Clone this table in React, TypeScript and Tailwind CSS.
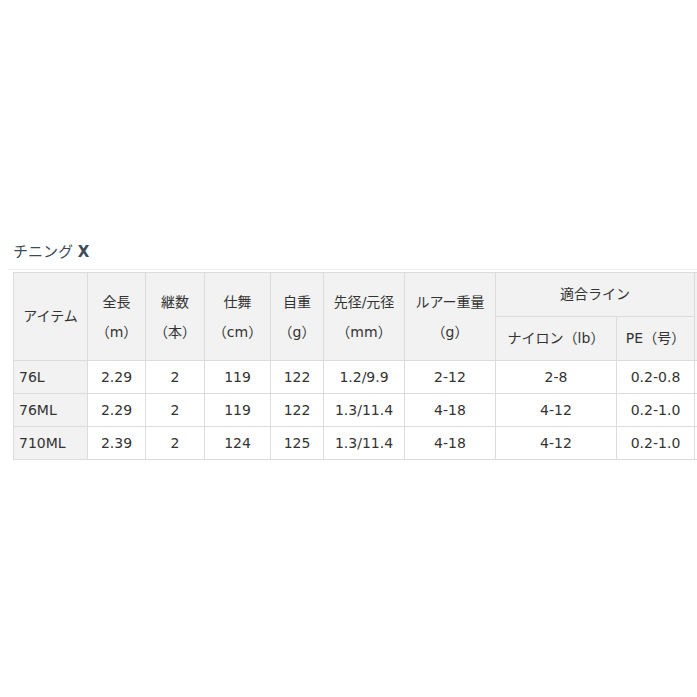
import React from "react";

const rows = [
  ["76L", "2.29", "2", "119", "122", "1.2/9.9", "2-12", "2-8", "0.2-0.8"],
  ["76ML", "2.29", "2", "119", "122", "1.3/11.4", "4-18", "4-12", "0.2-1.0"],
  ["710ML", "2.39", "2", "124", "125", "1.3/11.4", "4-18", "4-12", "0.2-1.0"],
];

const widths = [74, 58, 59, 66, 53, 81, 91, 121, 78, 80];

export default function App() {
  const th = "border border-[#dcdcdc] bg-[#f2f2f2] font-normal text-center align-middle p-0";
  const td = "border border-[#dcdcdc] text-center align-middle p-0 h-[33px]";
  return (
    <div
      className="w-[697px] h-[697px] overflow-hidden bg-white text-[#333] text-[14px]"
      style={{ fontFamily: '"DejaVu Sans", "Noto Sans CJK JP", sans-serif' }}
    >
      <div className="pt-[240px] pl-[13px]">
        <div className="h-[25px] text-[15px] text-[#3d4a57] leading-[25px]">
          チニング <span className="font-bold">X</span>
        </div>
        <div className="h-[1px] bg-[#f0f0f0] ml-[-5px] mt-[4px] mb-[2px] w-[700px]" />
        <table className="border-collapse table-fixed w-[761px]">
          <colgroup>
            {widths.map((w, i) => (
              <col key={i} style={{ width: w }} />
            ))}
          </colgroup>
          <thead>
            <tr className="h-[44px]">
              <th rowSpan={2} className={th}>アイテム</th>
              <th rowSpan={2} className={th}>
                <div className="leading-[30px]">全長</div>
                <div className="leading-[30px]">（m）</div>
              </th>
              <th rowSpan={2} className={th}>
                <div className="leading-[30px]">継数</div>
                <div className="leading-[30px]">（本）</div>
              </th>
              <th rowSpan={2} className={th}>
                <div className="leading-[30px]">仕舞</div>
                <div className="leading-[30px]">（cm）</div>
              </th>
              <th rowSpan={2} className={th}>
                <div className="leading-[30px]">自重</div>
                <div className="leading-[30px]">（g）</div>
              </th>
              <th rowSpan={2} className={th}>
                <div className="leading-[30px] whitespace-nowrap">先径/元径</div>
                <div className="leading-[30px]">（mm）</div>
              </th>
              <th rowSpan={2} className={th}>
                <div className="leading-[30px] whitespace-nowrap">ルアー重量</div>
                <div className="leading-[30px]">（g）</div>
              </th>
              <th colSpan={2} className={th}>適合ライン</th>
              <th rowSpan={2} className={th}></th>
            </tr>
            <tr className="h-[44px]">
              <th className={th}>ナイロン（lb）</th>
              <th className={th}>PE（号）</th>
            </tr>
          </thead>
          <tbody>
            {rows.map((r) => (
              <tr key={r[0]}>
                {r.map((c, i) => (
                  <td
                    key={i}
                    className={
                      i === 0
                        ? "border border-[#dcdcdc] bg-[#f2f2f2] text-left pl-[5px] align-middle h-[33px]"
                        : td
                    }
                  >
                    {c}
                  </td>
                ))}
                <td className={td}></td>
              </tr>
            ))}
          </tbody>
        </table>
      </div>
    </div>
  );
}
